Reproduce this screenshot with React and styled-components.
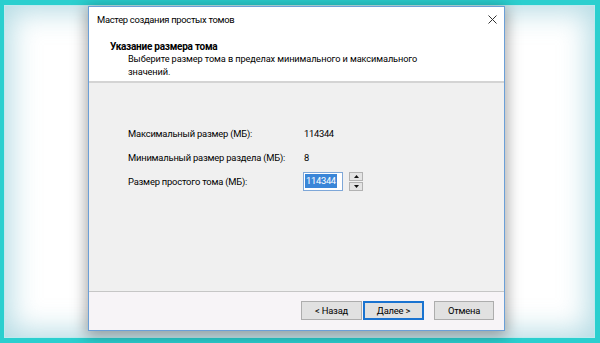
import styled, { createGlobalStyle } from "styled-components";

const GlobalStyle = createGlobalStyle`
  html, body {
    margin: 0;
    padding: 0;
    width: 600px;
    height: 343px;
    overflow: hidden;
    background: #2bcfcf;
  }
  * { box-sizing: border-box; }
`;

const Frame = styled.div`
  width: 600px;
  height: 343px;
  padding: 5px 5px 5px 4px;
  background: #2bcfcf;
`;

const Backdrop = styled.div`
  width: 100%;
  height: 100%;
  background: #ffffff;
  box-shadow: inset 0 0 28px 6px rgba(120, 190, 205, 0.55);
  border: 1px solid #bfe9ee;
  padding: 0 0 0 83px;
  font-family: Roboto, "Noto Sans", sans-serif;
  font-size: 9.4px;
  letter-spacing: -0.2px;
  color: #000;
`;

const Dialog = styled.div`
  width: 417px;
  height: 325px;
  border: 1px solid #6b9fd7;
  display: flex;
  flex-direction: column;
  background: #fff;
  box-shadow: 0 3px 14px 2px rgba(0, 0, 0, 0.35);
`;

const TitleBar = styled.div`
  height: 25px;
  display: flex;
  align-items: center;
  justify-content: space-between;
  padding: 0 7px 0 8px;
  font-size: 9.4px;
  letter-spacing: -0.3px;
`;

const CloseButton = styled.svg`
  width: 9px;
  height: 9px;
`;

const Header = styled.div`
  height: 51px;
  padding: 8px 0 0 21px;
  border-bottom: 2px solid #d4d4d4;
`;

const HeaderTitle = styled.div`
  font-weight: 700;
  font-size: 10px;
  letter-spacing: -0.25px;
  line-height: 13px;
`;

const HeaderText = styled.div`
  padding-left: 18px;
  line-height: 12.5px;
  font-size: 9.2px;
  letter-spacing: -0.1px;
`;

const Content = styled.div`
  flex: 1;
  background: #f0f0f0;
  padding: 38px 0 0 39px;
  display: grid;
  grid-template-columns: 175px auto;
  grid-auto-rows: 24px;
  align-content: start;
  align-items: center;
  border-bottom: 1px solid #c6c6c6;
`;

const Label = styled.div`
  white-space: nowrap;
`;

const Value = styled.div`
  padding-left: 1px;
  letter-spacing: -0.3px;
`;

const SpinRow = styled.div`
  display: flex;
  align-items: center;
  gap: 6px;
`;

const NumberBox = styled.div`
  width: 40px;
  height: 19px;
  background: #fff;
  border: 1px solid #7ea7d8;
  display: flex;
  align-items: center;
  padding-left: 1px;
`;

const Selected = styled.span`
  background: #3a86d8;
  color: #fff;
  letter-spacing: -0.3px;
  line-height: 14px;
  padding: 0 1px;
`;

const Spinner = styled.div`
  display: flex;
  flex-direction: column;
  gap: 1px;
`;

const SpinButton = styled.div`
  width: 14px;
  height: 9px;
  background: #e4e4e4;
  border: 1px solid #b2b2b2;
  display: flex;
  align-items: center;
  justify-content: center;
`;

const Footer = styled.div`
  height: 38px;
  background: #f7f4f7;
  display: flex;
  align-items: center;
  justify-content: flex-end;
  padding: 0 10px 2px 0;
`;

const Button = styled.div`
  width: ${(p) => p.$w || 61}px;
  height: 19px;
  margin-left: ${(p) => p.$gap || 0}px;
  background: #e1e1e1;
  border: 1px solid ${(p) => (p.$focused ? "#1a73d0" : "#adadad")};
  box-shadow: ${(p) => (p.$focused ? "inset 0 0 0 1px #1a73d0" : "none")};
  display: flex;
  align-items: center;
  justify-content: center;
`;

const Arrow = ({ up }) => (
  <svg width="5" height="3" viewBox="0 0 5 3">
    <path d={up ? "M0 3 L2.5 0 L5 3 Z" : "M0 0 L2.5 3 L5 0 Z"} fill="#111" />
  </svg>
);

export default function App() {
  return (
    <>
      <GlobalStyle />
      <Frame>
        <Backdrop>
          <Dialog>
            <TitleBar>
              <span>Мастер создания простых томов</span>
              <CloseButton viewBox="0 0 9 9">
                <path d="M0.5 0.5 L8.5 8.5 M8.5 0.5 L0.5 8.5" stroke="#333" strokeWidth="1" />
              </CloseButton>
            </TitleBar>
            <Header>
              <HeaderTitle>Указание размера тома</HeaderTitle>
              <HeaderText>
                Выберите размер тома в пределах минимального и максимального
                <br />
                значений.
              </HeaderText>
            </Header>
            <Content>
              <Label>Максимальный размер (МБ):</Label>
              <Value>114344</Value>
              <Label>Минимальный размер раздела (МБ):</Label>
              <Value>8</Value>
              <Label>Размер простого тома (МБ):</Label>
              <SpinRow>
                <NumberBox>
                  <Selected>114344</Selected>
                </NumberBox>
                <Spinner>
                  <SpinButton>
                    <Arrow up />
                  </SpinButton>
                  <SpinButton>
                    <Arrow />
                  </SpinButton>
                </Spinner>
              </SpinRow>
            </Content>
            <Footer>
              <Button>&lt; Назад</Button>
              <Button $focused $gap={1}>Далее &gt;</Button>
              <Button $w={60} $gap={10}>Отмена</Button>
            </Footer>
          </Dialog>
        </Backdrop>
      </Frame>
    </>
  );
}
